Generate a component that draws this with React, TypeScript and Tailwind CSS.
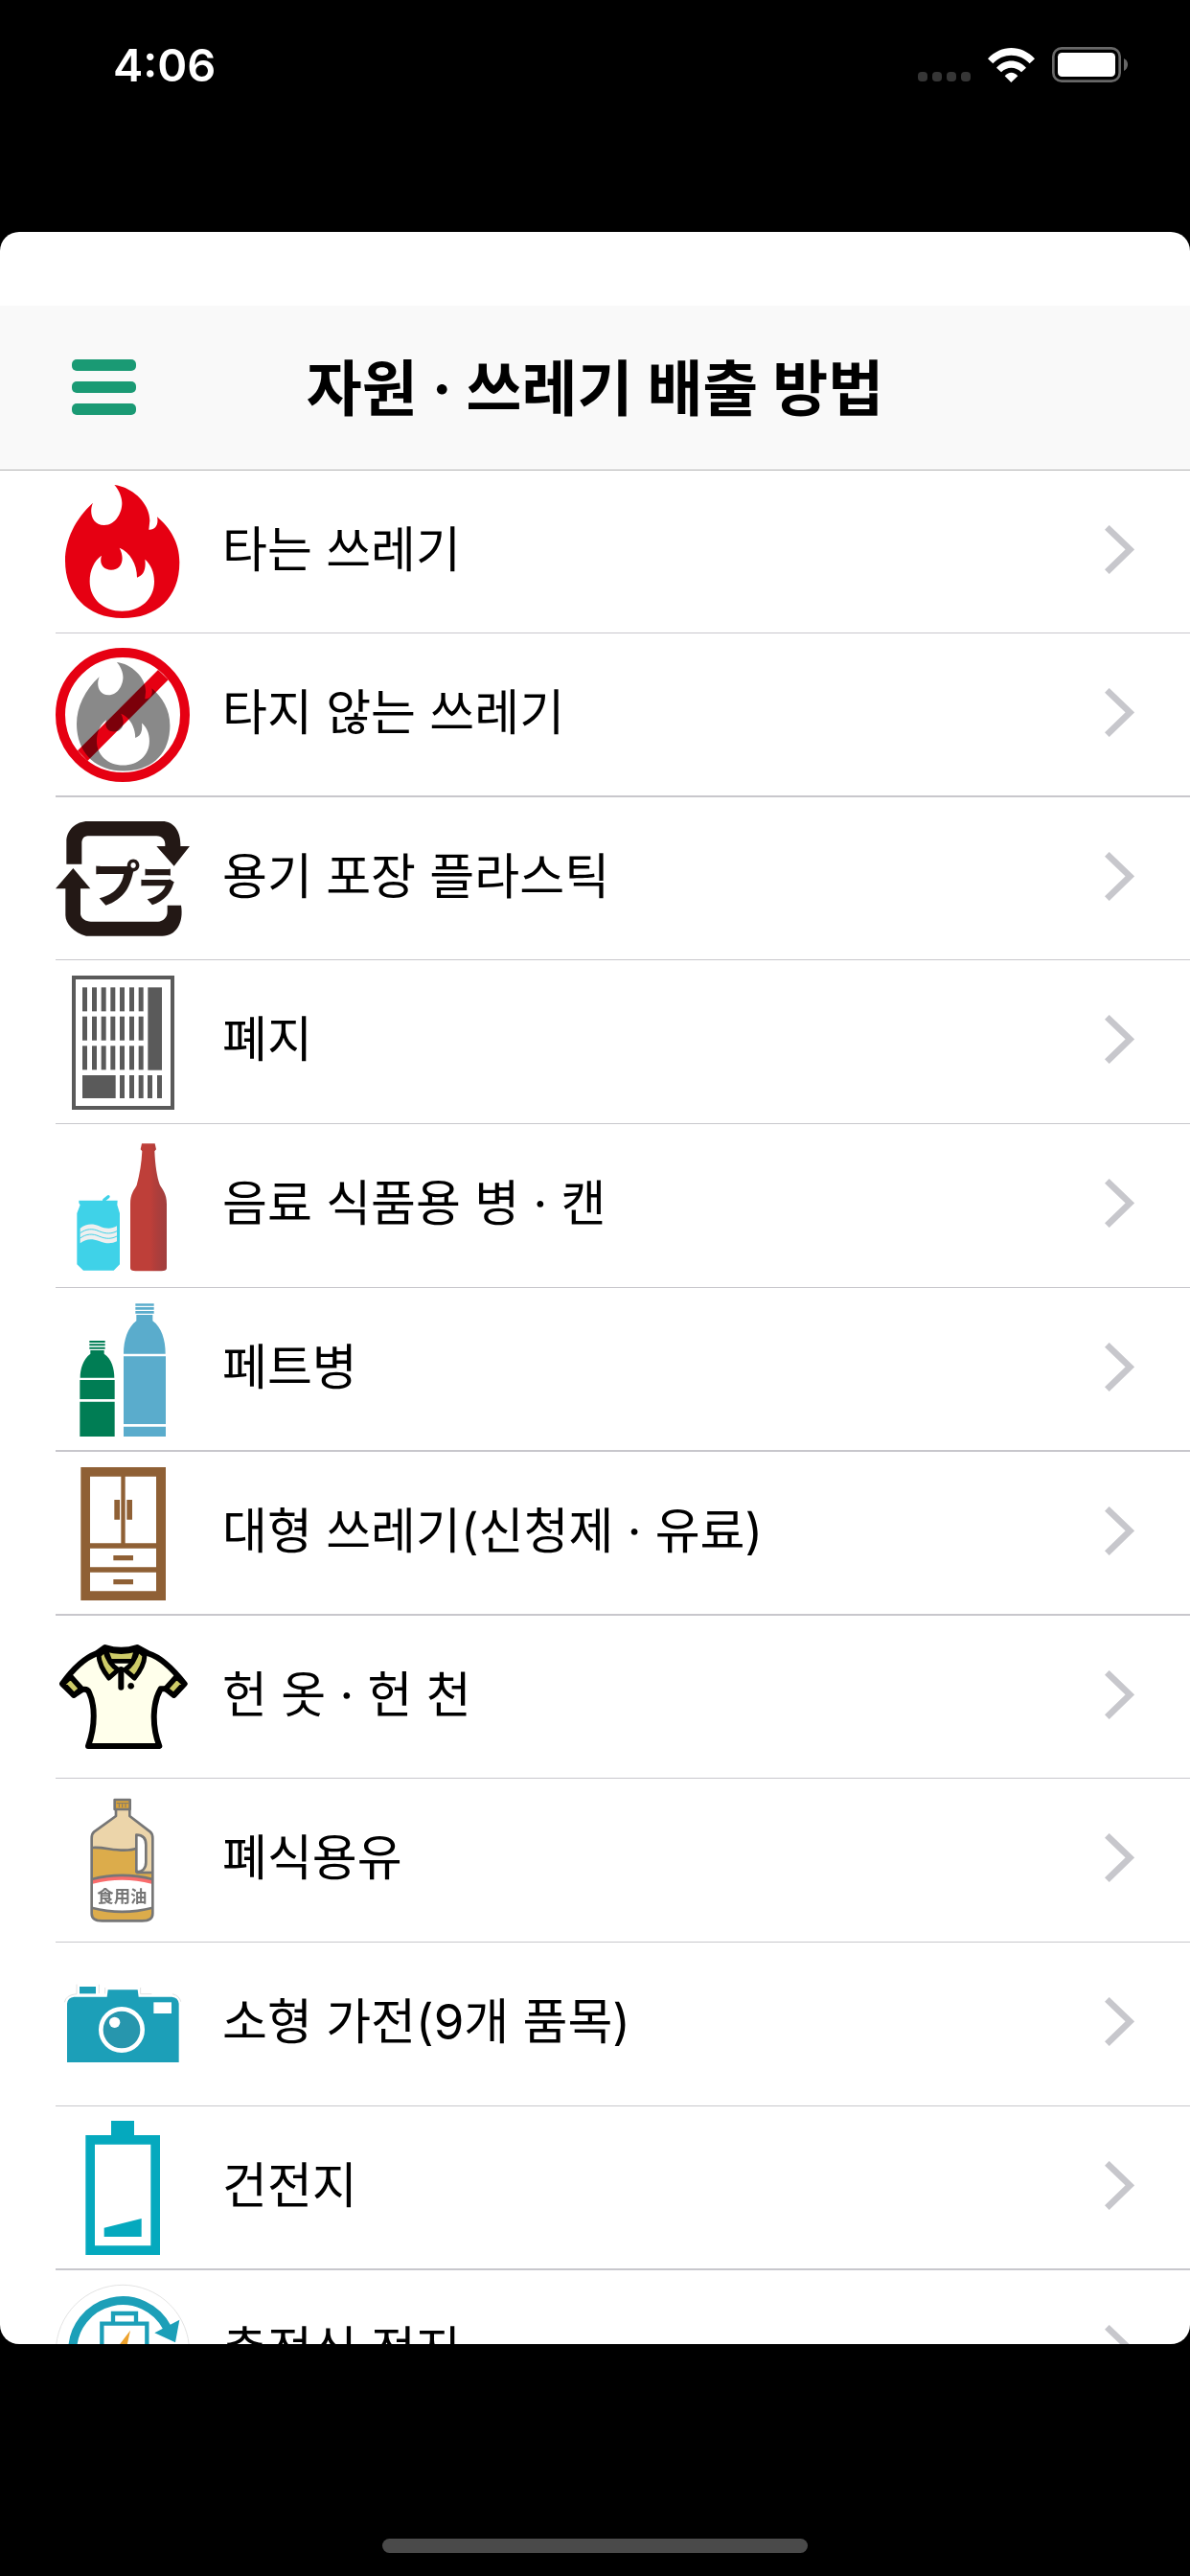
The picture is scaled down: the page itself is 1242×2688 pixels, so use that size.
import type { ReactNode } from "react";

type Category = {
  label: string;
  icon: ReactNode;
  thick?: boolean;
};

const FIRE =
  "M238 48C292 54 349 104 349 160L346 188C364 190 378 174 372 148C412 182 442 228 442 290C442 402 370 465 264 465C150 465 84 388 84 285C84 220 115 155 171 104C158 134 168 174 206 174C243 174 262 134 262 105C262 85 250 60 238 48Z" +
  "M254 245C287 258 309 296 309 338C328 332 338 315 334 281C352 297 363 320 363 350C363 405 320 443 262 443C205 443 161 405 161 350C161 315 175 285 198 269C190 294 202 314 228 314C262 314 272 278 254 245Z";

function Icon({ top, children }: { top: number; children: ReactNode }) {
  return (
    <svg
      viewBox={`54 ${top} 420 420`}
      className="mt-[6px] size-[140px] shrink-0 overflow-visible"
      aria-hidden="true"
    >
      {children}
    </svg>
  );
}

function FireIcon() {
  return (
    <Icon top={48}>
      <path d={FIRE} fill="#e60012" fillRule="evenodd" />
    </Icon>
  );
}

function NoFireIcon() {
  return (
    <Icon top={558}>
      <path
        d={FIRE}
        fill="#898989"
        fillRule="evenodd"
        transform="translate(51.5 564) scale(.816)"
      />
      <circle cx="264" cy="768" r="195" fill="none" stroke="#e60012" strokeWidth="30" />
      <path d="M123 880L375 627L407 658L154 912Z" fill="#e60012" className="mix-blend-multiply" />
    </Icon>
  );
}

function PlasticIcon() {
  return (
    <Icon top={51}>
      <g fill="#231815">
        <path d="M88 215V145C88 108 118 81 155 81H388C424 81 445 112 445 152V159H474L425 221L370 159H397C399 140 388 127 370 127H155C142 127 136 138 136 150V215Z" />
        <path d="M109 228L163 292H132V372C135 386 148 395 165 395H375C390 394 404 382 404 365V344H447C456 398 432 440 388 440H150C112 430 85 402 85 375V292H54Z" />
        <g className="font-['Noto_Sans_CJK_JP',sans-serif] font-black">
          <text x="167" y="334" fontSize="152">
            プ
          </text>
          <text x="306" y="334" fontSize="130">
            ラ
          </text>
        </g>
      </g>
    </Icon>
  );
}

function PaperIcon() {
  const columns = [138, 168, 197, 226, 255, 285, 314];
  const lines = [601, 692, 784];
  return (
    <Icon top={561}>
      <rect x="111" y="570" width="309" height="408" fill="#fff" stroke="#5a5a5a" strokeWidth="12" />
      <g fill="#5a5a5a">
        {lines.map((y) =>
          columns.map((x) => <rect key={`${x}-${y}`} x={x} y={y} width="15" height="75" />)
        )}
        <rect x="343" y="601" width="44" height="259" />
        <rect x="138" y="876" width="104" height="72" />
        {[255, 285, 314, 342, 372].map((x) => (
          <rect key={x} x={x} y="876" width="15" height="72" />
        ))}
      </g>
    </Icon>
  );
}

function BottleCanIcon() {
  return (
    <Icon top={54}>
      <defs>
        <linearGradient id="bottle">
          <stop offset="0.55" stopColor="#be3f39" />
          <stop offset="0.65" stopColor="#b43e3a" />
          <stop offset="0.78" stopColor="#ab3e3c" />
          <stop offset="1" stopColor="#a13f3e" />
        </linearGradient>
      </defs>
      <path d="M127 248H248L247 262L255 288V448L236 467H141L121 448V288L131 262L127 256Z" fill="#3fd2e8" />
      <path d="M206 247L219 236" stroke="#3fd2e8" strokeWidth="10" strokeLinecap="round" />
      <path
        d="M131 335C150 320 170 319 190 328C214 339 230 337 246 328V376C230 384 212 384 190 375C166 366 150 368 131 382Z"
        fill="#efefef"
      />
      <path
        d="M131 350C150 336 170 335 190 344C214 354 230 352 246 344M131 366C150 352 170 351 190 360C214 370 230 368 246 360"
        fill="none"
        stroke="#3fd2e8"
        strokeWidth="3"
      />
      <path
        d="M324 70H365L369 88L364 94C366 140 372 175 380 198C388 214 402 225 402 260V460Q402 469 385 469H305Q288 469 288 460V260C288 225 300 216 308 200C318 165 323 130 325 94L320 88Z"
        fill="url(#bottle)"
      />
    </Icon>
  );
}

function PetBottleIcon() {
  return (
    <Icon top={567}>
      <g fill="#007d54">
        <path d="M160 687H209V693H160ZM160 697H209V703H160ZM160 707H209V713H160Z" />
        <path d="M163 717H206V728C230 744 238 775 238 803H131C131 775 140 745 163 728Z" />
        <path d="M130 810H239V870H130ZM130 878H239V987H130Z" />
      </g>
      <g fill="#5aaccc">
        <path d="M304 571H362V578H304ZM304 582H362V590H304ZM304 594H362V602H304Z" />
        <path d="M307 606H358V625C386 645 398 685 398 728H267C267 685 280 645 307 625Z" />
        <path d="M267 736H399V948H267ZM267 956H399V987H267Z" />
      </g>
    </Icon>
  );
}

function WardrobeIcon() {
  return (
    <Icon top={60}>
      <path d="M133 63H399V480H133Z" fill="#8f6035" />
      <path
        d="M162 92H259V301H162ZM272 92H369V301H272ZM162 317H369V376H162ZM162 392H369V451H162Z"
        fill="#fff"
      />
      <path
        d="M238 165H255V227H238ZM277 165H294V227H277ZM235 339H297V355H235ZM235 414H297V430H235Z"
        fill="#8f6035"
      />
    </Icon>
  );
}

function ShirtIcon() {
  return (
    <Icon top={573}>
      <g stroke="#000" strokeLinejoin="round" strokeLinecap="round">
        <path
          d="M209 627Q260 643 309 627L345 646C385 658 420 693 458 741L425 776L404 757L383 757C358 800 354 870 379 936H156C180 870 177 805 159 768Q154 756 138 759L111 776L75 741C108 695 140 662 182 646Z"
          fill="#ffffeb"
          strokeWidth="18"
        />
        <path d="M211 634Q260 648 307 634L296 670H225Z" fill="#cdcb68" strokeWidth="14" />
        <path d="M189 652L208 634C216 664 228 684 250 697L221 723C203 700 190 672 189 652Z" fill="#cdcb68" strokeWidth="15" />
        <path d="M333 652L312 634C304 664 292 684 271 697L301 723C320 700 332 672 333 652Z" fill="#cdcb68" strokeWidth="15" />
        <path d="M259 696V752" strokeWidth="18" />
        <path d="M101 718L136 757L111 777L77 741ZM433 718L398 757L424 777L457 741Z" fill="#cdcb68" strokeWidth="17" />
        <circle cx="290" cy="748" r="9" strokeWidth="2" />
      </g>
    </Icon>
  );
}

function OilIcon() {
  return (
    <Icon top={63}>
      <path
        d="M243 114V135L175 184Q167 191 167 205V440Q167 463 200 463H325Q358 463 358 440V205Q358 191 350 184L286 135V114Z"
        fill="#ecd5aa"
      />
      <path
        d="M167 234C205 232 230 242 268 242Q295 241 307 236V314H358V440Q358 463 325 463H200Q167 463 167 440Z"
        fill="#dcac4b"
      />
      <path d="M167 335Q262 308 358 335V422Q262 448 167 422Z" fill="#fff" />
      <path d="M169 341Q262 316 356 341" fill="none" stroke="#f96c6c" strokeWidth="13" />
      <g stroke="#767676" strokeWidth="8" fill="none" strokeLinejoin="round">
        <path d="M167 333Q262 308 358 333M167 422Q262 447 358 422" />
        <path d="M171 234C205 232 230 242 268 242Q295 241 307 236" />
        <path d="M307 194C330 194 337 208 337 225V280C337 300 325 310 307 310Z" fill="#fff" />
        <path d="M307 312H358" />
        <path d="M243 114V135L175 184Q167 191 167 205V440Q167 463 200 463H325Q358 463 358 440V205Q358 191 350 184L286 135V114" />
        <rect x="239" y="84" width="48" height="30" fill="#dca438" />
        <path d="M245 95H282M253 97V108M263 97V108M273 97V108" strokeWidth="3" />
      </g>
      <text
        x="184"
        y="404"
        fontSize="52"
        fill="#767676"
        className="font-['Noto_Sans_CJK_JP',sans-serif] font-bold"
      >
        食用油
      </text>
    </Icon>
  );
}

function CameraIcon() {
  return (
    <Icon top={576}>
      <path
        d="M82 718Q86 695 120 692V662M190 662V690M209 672V691M320 672V692H355M420 692Q442 698 446 716"
        fill="none"
        stroke="#e2e2e2"
        strokeWidth="3"
      />
      <path d="M129 669H180V691H129Z" fill="#1c9fb8" />
      <path d="M90 906V722Q92 703 112 701H215L218 679H311L314 701H418Q438 703 440 722V906Z" fill="#1c9fb8" />
      <circle cx="261" cy="804" r="65" fill="#2796ad" stroke="#fff" strokeWidth="14" />
      <circle cx="239" cy="781" r="17" fill="#fff" />
      <path d="M361 718H417V753H361Z" fill="#fff" />
    </Icon>
  );
}

function BatteryIcon() {
  return (
    <Icon top={69}>
      <g fill="#05a9be">
        <path d="M228 69H300V114H381V489H148V114H228ZM177 143V460H352V143Z" fillRule="evenodd" />
        <path d="M206 404L323 375V432H206Z" />
      </g>
    </Icon>
  );
}

function RechargeIcon() {
  return (
    <Icon top={582}>
      <circle cx="264" cy="792" r="209" fill="#fff" stroke="#d4d4d4" strokeWidth="2" />
      <g fill="none" stroke="#1c9fb8">
        <path d="M107 789A157 157 0 0 1 404 718" strokeWidth="27" />
        <path d="M421 789A157 157 0 0 1 124 860" strokeWidth="27" />
        <path d="M199 704H340V910H199ZM234 704V672H306V704" strokeWidth="13" />
      </g>
      <path d="M364 733L442 692L429 763ZM164 845L86 886L99 815Z" fill="#1c9fb8" />
      <path d="M288 725L222 812H262L246 884L316 790H274Z" fill="#eda22d" />
    </Icon>
  );
}

const categories: Category[] = [
  { label: "타는 쓰레기", icon: <FireIcon /> },
  { label: "타지 않는 쓰레기", icon: <NoFireIcon />, thick: true },
  { label: "용기 포장 플라스틱", icon: <PlasticIcon /> },
  { label: "폐지", icon: <PaperIcon /> },
  { label: "음료 식품용 병 · 캔", icon: <BottleCanIcon /> },
  { label: "페트병", icon: <PetBottleIcon />, thick: true },
  { label: "대형 쓰레기(신청제 · 유료)", icon: <WardrobeIcon />, thick: true },
  { label: "헌 옷 · 헌 천", icon: <ShirtIcon /> },
  { label: "폐식용유", icon: <OilIcon /> },
  { label: "소형 가전(9개 품목)", icon: <CameraIcon /> },
  { label: "건전지", icon: <BatteryIcon />, thick: true },
  { label: "충전식 전지", icon: <RechargeIcon /> },
];

function StatusBar() {
  return (
    <div className="flex h-[242px] shrink-0 items-start justify-between pt-[44px] pr-[64px] pl-[118px] text-white">
      <time className="text-[47px] leading-[48px] font-semibold">4:06</time>
      <div className="flex items-end pt-[5px]">
        <div className="mr-[18px] flex gap-[5px] pb-px">
          {[0, 1, 2, 3].map((dot) => (
            <span key={dot} className="size-[10px] rounded-[4px] bg-[#363636]" />
          ))}
        </div>
        <svg viewBox="0 0 147 108" className="h-[36px] w-[49px]" fill="#fff" aria-hidden="true">
          <path d="M0 34C42 -11 105 -11 147 34L131 49C98 15 49 15 16 49Z" />
          <path d="M27 62C54 33 93 33 120 62L105 76C87 58 60 58 42 76Z" />
          <path d="M53 88C65 74 82 74 94 88L73 108Z" />
        </svg>
        <svg viewBox="0 0 240 111" className="ml-[18px] h-[37px] w-[80px]" aria-hidden="true">
          <rect x="4" y="4" width="208" height="103" rx="26" fill="none" stroke="#686868" strokeWidth="8" />
          <rect x="18" y="18" width="180" height="75" rx="13" fill="#fff" />
          <path d="M225 36Q237 42 237 55Q237 69 225 75Z" fill="#686868" />
        </svg>
      </div>
    </div>
  );
}

function Header() {
  return (
    <header className="mt-[77px] grid h-[172px] shrink-0 grid-cols-[142px_1fr_142px] items-center border-b border-[#b2b2b2] bg-[#f9f9f9] pb-[2px]">
      <button
        type="button"
        aria-label="메뉴"
        className="ml-[75px] flex w-[67px] flex-col gap-[11px]"
      >
        <span className="h-[12px] w-full rounded-[5px] bg-[#1a9a74]" />
        <span className="h-[12px] w-full rounded-[5px] bg-[#1a9a74]" />
        <span className="h-[12px] w-full rounded-[5px] bg-[#1a9a74]" />
      </button>
      <h1 className="pt-[2px] text-center text-[63px] leading-[80px] font-bold whitespace-nowrap">
        자원 · 쓰레기 배출 방법
      </h1>
    </header>
  );
}

function CategoryRow({ category }: { category: Category }) {
  return (
    <li
      className={`ml-[58px] h-[171px] border-[#c8c7cc] first:h-[170px] nth-[5n+3]:h-[170px] ${
        category.thick ? "border-b-2" : "border-b"
      }`}
    >
      <a href="#" className="flex h-[164px] items-center pr-[58px]">
        {category.icon}
        <span className="ml-[34px] flex-1 pt-[2px] text-[51px] leading-[64px]">
          {category.label}
        </span>
        <svg viewBox="0 0 93 153" className="h-[51px] w-[31px]" aria-hidden="true">
          <path d="M7 7L79 76L7 146" fill="none" stroke="#c7c7cc" strokeWidth="20" />
        </svg>
      </a>
    </li>
  );
}

export default function App() {
  return (
    <div className="flex h-screen flex-col bg-black font-['Inter','Noto_Sans_CJK_KR',sans-serif] text-black">
      <StatusBar />
      <main className="flex min-h-0 flex-1 flex-col overflow-hidden rounded-[20px] bg-white">
        <Header />
        <ul className="min-h-0 flex-1 overflow-y-auto [scrollbar-width:none]">
          {categories.map((category) => (
            <CategoryRow key={category.label} category={category} />
          ))}
        </ul>
      </main>
      <footer className="flex h-[242px] shrink-0 items-end justify-center pb-[24px]">
        <div className="h-[15px] w-[444px] rounded-full bg-[#4a4a4a]" />
      </footer>
    </div>
  );
}
